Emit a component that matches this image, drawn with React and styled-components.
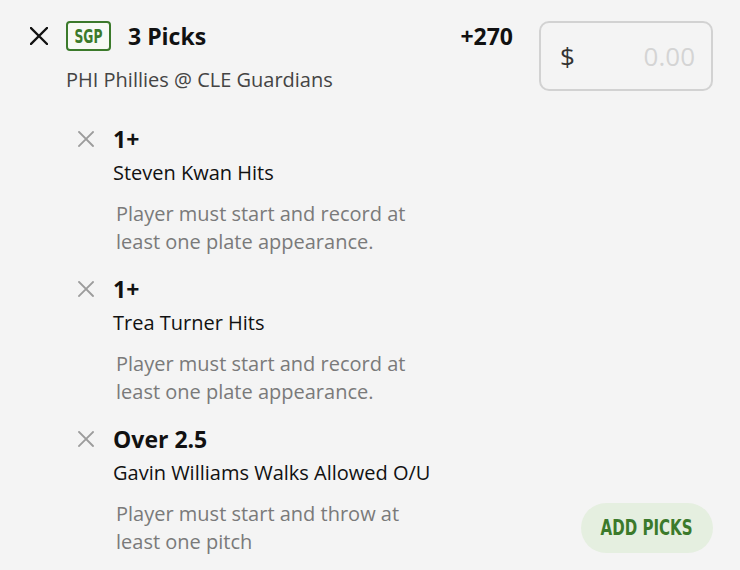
import React from 'react'
import styled, { createGlobalStyle } from 'styled-components'

const GlobalStyle = createGlobalStyle`
  html, body {
    margin: 0;
    padding: 0;
    background: #f4f4f4;
  }
  body {
    font-family: "Open Sans", "Noto Sans", sans-serif;
    color: #111;
  }
`

const GREEN = '#3b7a2b'

const Page = styled.div`
  width: 740px;
  height: 570px;
  box-sizing: border-box;
  padding: 21px 27px 15px 30px;
  display: flex;
  flex-direction: column;
  overflow: hidden;
`

const Header = styled.div`
  display: flex;
  align-items: flex-start;
`

const IconButton = styled.button`
  display: flex;
  align-items: center;
  justify-content: center;
  border: 0;
  background: none;
  padding: 0;
  height: ${p => p.$height}px;
  color: ${p => p.$color};
  cursor: pointer;
`

const HeaderMain = styled.div`
  flex: 1;
  margin-left: 18px;
`

const TitleRow = styled.div`
  display: flex;
  align-items: center;
  height: 30px;
`

const Badge = styled.span`
  box-sizing: border-box;
  height: 30px;
  width: 45px;
  display: flex;
  align-items: center;
  justify-content: center;
  border: 2px solid ${GREEN};
  border-radius: 4px;
  background: #f7faf5;
  color: ${GREEN};
  font-size: 19px;
`

const Condensed = styled.span`
  display: inline-block;
  font-family: "DejaVu Sans Condensed", "DejaVu Sans", sans-serif;
  font-weight: 700;
  transform: scaleX(${p => p.$scale});
  white-space: nowrap;
`

const Title = styled.h1`
  margin: 0 0 0 17px;
  font-size: 23px;
  font-weight: 700;
  line-height: 26px;
`

const Odds = styled.span`
  margin-left: auto;
  font-size: 23px;
  font-weight: 700;
  line-height: 26px;
`

const Subtitle = styled.div`
  margin-top: 16px;
  font-size: 20px;
  line-height: 26px;
  color: #444;
`

const StakeBox = styled.label`
  box-sizing: border-box;
  width: 174px;
  height: 70px;
  margin-left: 26px;
  border: 2px solid #d2d2d2;
  border-radius: 10px;
  display: flex;
  align-items: center;
  padding: 0 14px 0 19px;
  font-size: 26px;
`

const Currency = styled.span`
  color: #333;
`

const StakeInput = styled.input`
  flex: 1;
  min-width: 0;
  border: 0;
  background: transparent;
  text-align: right;
  font: inherit;
  color: #333;
  outline: none;
  &::placeholder {
    color: #d4d4d4;
  }
`

const Body = styled.div`
  flex: 1;
  display: grid;
  grid-template-columns: 1fr auto;
  margin-top: 33px;
`

const Legs = styled.div`
  display: flex;
  flex-direction: column;
  gap: 20px;
  padding-left: 48px;
`

const Leg = styled.div`
  display: grid;
  grid-template-columns: 16px 1fr;
  column-gap: 19px;
`

const LegLine = styled.div`
  font-size: ${p => (p.$strong ? 23 : 20)}px;
  font-weight: ${p => (p.$strong ? 700 : 400)};
  line-height: 26px;
  margin-top: ${p => p.$gap || 0}px;
`

const LegNote = styled.p`
  margin: 14px 0 0 3px;
  max-width: 310px;
  font-size: 20px;
  line-height: 28px;
  color: #7a7a7a;
`

const AddButton = styled.button`
  align-self: end;
  margin-bottom: 3px;
  width: 132px;
  height: 50px;
  padding: 0;
  border: 0;
  border-radius: 25px;
  background: #e5efe0;
  color: ${GREEN};
  font-size: 22px;
  cursor: pointer;
`

const Cross = ({ size, weight }) => (
  <svg width={size} height={size} viewBox={`0 0 ${size} ${size}`}>
    <path
      d={`M1 1L${size - 1} ${size - 1}M${size - 1} 1L1 ${size - 1}`}
      stroke="currentColor"
      strokeWidth={weight}
      strokeLinecap="square"
      fill="none"
    />
  </svg>
)

const legs = [
  {
    line: '1+',
    market: 'Steven Kwan Hits',
    note: 'Player must start and record at least one plate appearance.',
  },
  {
    line: '1+',
    market: 'Trea Turner Hits',
    note: 'Player must start and record at least one plate appearance.',
  },
  {
    line: 'Over 2.5',
    market: 'Gavin Williams Walks Allowed O/U',
    note: 'Player must start and throw at least one pitch',
  },
]

const App = () => (
  <>
    <GlobalStyle />
    <Page>
      <Header>
        <IconButton $height={30} $color="#111" aria-label="Remove">
          <Cross size={18} weight={2.3} />
        </IconButton>
        <HeaderMain>
          <TitleRow>
            <Badge>
              <Condensed $scale={0.72}>SGP</Condensed>
            </Badge>
            <Title>3 Picks</Title>
            <Odds>+270</Odds>
          </TitleRow>
          <Subtitle>PHI Phillies @ CLE Guardians</Subtitle>
        </HeaderMain>
        <StakeBox>
          <Currency>$</Currency>
          <StakeInput placeholder="0.00" />
        </StakeBox>
      </Header>
      <Body>
        <Legs>
          {legs.map((leg, i) => (
            <Leg key={i}>
              <IconButton $height={26} $color="#9c9c9c" aria-label="Remove pick">
                <Cross size={16} weight={1.8} />
              </IconButton>
              <div>
                <LegLine $strong>{leg.line}</LegLine>
                <LegLine $gap={8}>{leg.market}</LegLine>
                <LegNote>{leg.note}</LegNote>
              </div>
            </Leg>
          ))}
        </Legs>
        <AddButton>
          <Condensed $scale={0.76}>ADD PICKS</Condensed>
        </AddButton>
      </Body>
    </Page>
  </>
)

export default App
